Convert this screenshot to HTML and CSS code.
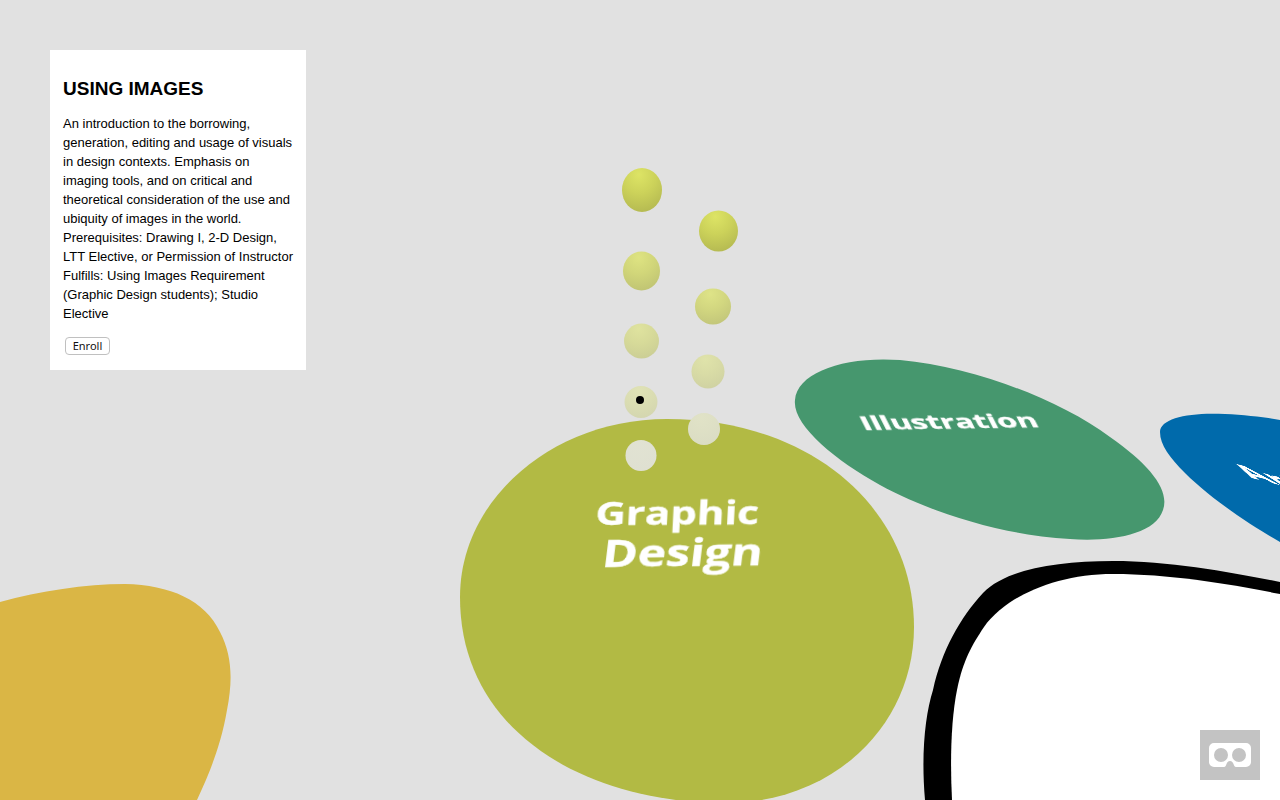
FILE: index.html
```html
<!DOCTYPE html>
<html>
<head>
    <title>Using Images</title>
    <link rel="stylesheet" href="styles.css">
</head>
<body>
    <svg class="scene" viewBox="0 0 1280 800" width="1280" height="800">
        <defs>
            <radialGradient id="ball" cx="0.42" cy="0.15" r="0.85">
                <stop offset="0" stop-color="#dde465"/>
                <stop offset="0.5" stop-color="#ccd25a"/>
                <stop offset="1" stop-color="#b6bb52"/>
            </radialGradient>
        </defs>

        <!-- islands -->
        <path class="island island-yellow" d="M0 602 C40 591 85 584 125 584 C170 585 205 600 220 632 C232 655 233 680 227 710 C221 745 210 772 197 800 L0 800 Z"/>
        <path class="island island-olive" d="M460 597 C460 499 553 419 667 419 C810 419 914 508 914 627 C914 724 835 803 725 803 C590 803 460 735 460 597 Z"/>
        <path class="island island-green" d="M795 400 C797 372 845 356 900 360 C975 367 1060 400 1110 437 C1150 465 1170 490 1163 510 C1155 535 1110 542 1070 539 C1000 535 930 512 880 485 C835 460 792 425 795 400 Z"/>
        <path class="island island-blue" d="M1160 432 C1160 418 1190 412 1225 414 C1245 415 1265 417 1280 420 L1280 542 C1250 525 1210 498 1185 473 C1170 458 1160 445 1160 432 Z"/>
        <path class="island island-black" d="M925 800 C921 755 925 715 933 690 C942 650 960 618 983 593 C1005 570 1055 561 1113 561 C1170 561 1230 572 1280 582 L1280 800 Z"/>
        <path class="island island-white" d="M952 800 C950 760 951 720 957 690 C963 660 972 645 984 627 C1005 597 1055 574 1113 574 C1170 574 1230 584 1280 594 L1280 800 Z"/>

        <!-- island labels -->
        <text class="label" font-size="42" transform="matrix(1 -0.005 -0.04 0.78 595 525)">Graphic</text>
        <text class="label" font-size="46" transform="matrix(1.04 -0.012 -0.1 0.82 601 567)">Design</text>
        <text class="label" font-size="30" transform="matrix(1.05 -0.017 0.33 0.65 864 430)">Illustration</text>
        <text class="label" font-size="40" transform="matrix(1 0.25 0.85 0.55 1252 478)">Art</text>

        <!-- course spheres -->
        <ellipse cx="642" cy="190" rx="20" ry="22" fill="url(#ball)"/>
        <circle class="ball-base" cx="641.5" cy="271" r="19"/>
        <ellipse cx="641.5" cy="271" rx="18.500" ry="19.500" fill="url(#ball)" opacity=".75"/>
        <circle class="ball-base" cx="641.5" cy="341" r="17"/>
        <ellipse cx="641.5" cy="341" rx="17.500" ry="17.500" fill="url(#ball)" opacity=".5"/>
        <circle class="ball-base" cx="641" cy="402" r="16"/>
        <ellipse cx="641" cy="402" rx="16.500" ry="16" fill="url(#ball)" opacity=".3"/>
        <circle class="ball-base" cx="641" cy="455.500" r="15.500"/>
        <ellipse cx="641" cy="455.500" rx="15" ry="15.500" fill="url(#ball)" opacity=".05"/>
        <ellipse cx="718.500" cy="231" rx="19.500" ry="20.500" fill="url(#ball)"/>
        <circle class="ball-base" cx="713" cy="306.500" r="18"/>
        <ellipse cx="713" cy="306.500" rx="18" ry="18" fill="url(#ball)" opacity=".7"/>
        <circle class="ball-base" cx="708" cy="371.500" r="16.500"/>
        <ellipse cx="708" cy="371.500" rx="16.500" ry="17" fill="url(#ball)" opacity=".4"/>
        <circle class="ball-base" cx="704" cy="429" r="16"/>
        <ellipse cx="704" cy="429" rx="16" ry="16" fill="url(#ball)" opacity=".15"/>

        <!-- gaze pointer -->
        <circle cx="640" cy="400" r="4"/>
    </svg>

    <div class="info-panel">
        <h2>USING IMAGES</h2>
        <p>An introduction to the borrowing, generation, editing and usage of visuals in design contexts. Emphasis on imaging tools, and on critical and theoretical consideration of the use and ubiquity of images in the world.<br>
        Prerequisites: Drawing I, 2-D Design, LTT Elective, or Permission of Instructor<br>
        Fulfills: Using Images Requirement (Graphic Design students); Studio Elective</p>
        <button type="button" class="enroll">Enroll</button>
    </div>

    <button type="button" class="vr-button" aria-label="Enter VR">
        <svg viewBox="0 0 42 24" width="42" height="24">
            <path fill="#fff" fill-rule="evenodd" d="M5 0 H37 A5 5 0 0 1 42 5 V19 A5 5 0 0 1 37 24 H27 C25.500 24 25 22.500 24.500 21 C24 19.500 23 18 21 18 C19 18 18 19.500 17.500 21 C17 22.500 16.500 24 15 24 H5 A5 5 0 0 1 0 19 V5 A5 5 0 0 1 5 0 Z M12 5 A7 7 0 1 0 12 19 A7 7 0 1 0 12 5 Z M30 5 A7 7 0 1 0 30 19 A7 7 0 1 0 30 5 Z"/>
        </svg>
    </button>
</body>
</html>
```

FILE: styles.css
```css
html, body {
    margin: 0;
    height: 100%;
    overflow: hidden;
}
body {
    background-color: #e1e1e1;
    font-family: "Liberation Sans", Arial, sans-serif;
    color: #000;
}
.scene {
    position: absolute;
    top: 0;
    left: 0;
    display: block;
}
.island {
    filter: blur(0.4px);
}
.island-yellow { fill: #dab645; }
.island-olive { fill: #b2ba44; }
.island-green { fill: #46976e; }
.island-blue { fill: #006aab; }
.island-black { fill: #000; }
.island-white { fill: #fff; }
.ball-base { fill: #e1e2d8; }
.label {
    fill: #fff;
    stroke: #fff;
    stroke-width: 0.5px;
    font-family: "Open Sans", sans-serif;
    font-weight: 700;
    filter: blur(0.4px);
}
.info-panel {
    position: relative;
    box-sizing: border-box;
    width: 256px;
    height: 320px;
    margin: 50px 0 0 50px;
    padding: 14px 13px 13px;
    background-color: #fff;
}
.info-panel h2 {
    margin: 13px 0 14px;
    font-size: 19px;
    line-height: 23px;
}
.info-panel p {
    margin: 0 0 14px;
    font-size: 13px;
    line-height: 19px;
}
.enroll {
    display: block;
    box-sizing: border-box;
    width: 45px;
    height: 18px;
    margin-left: 2px;
    padding: 0;
    background-color: #fff;
    border: 1px solid #c0c0c0;
    border-radius: 4px;
    font-family: "Noto Sans", sans-serif;
    font-size: 11px;
    line-height: 16px;
    color: #111;
}
.vr-button {
    position: absolute;
    right: 20px;
    bottom: 20px;
    display: flex;
    align-items: center;
    justify-content: center;
    width: 60px;
    height: 50px;
    padding: 0;
    border: none;
    background-color: #c3c3c3;
}
```
